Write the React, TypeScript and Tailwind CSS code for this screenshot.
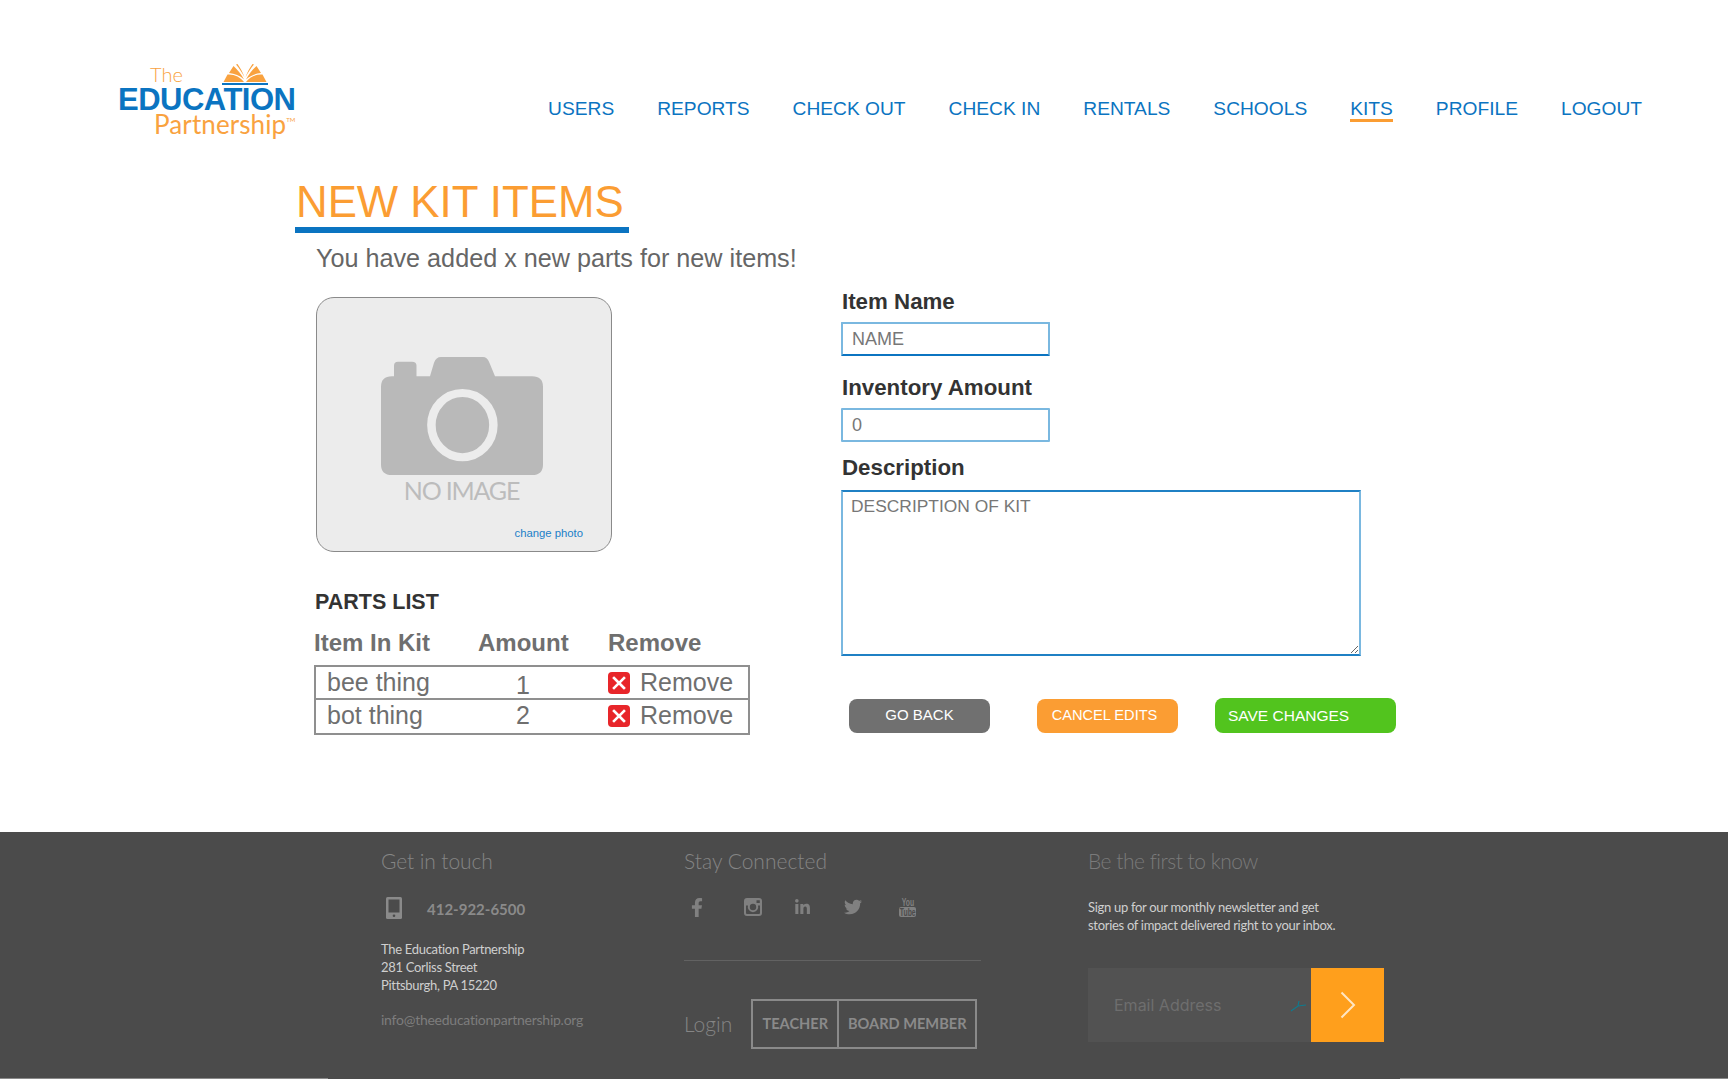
import { FaFacebookF, FaLinkedinIn, FaTwitter } from "react-icons/fa";

const navItems = ["USERS", "REPORTS", "CHECK OUT", "CHECK IN", "RENTALS", "SCHOOLS", "KITS", "PROFILE", "LOGOUT"];

const parts = [
  { name: "bee thing", amount: "1", rowClass: "pb-[4px]", textClass: "pb-[3px]", amountClass: "pt-[4px]" },
  { name: "bot thing", amount: "2", rowClass: "pb-[2px]", textClass: "pb-[2px]", amountClass: "pb-[2px]" },
];

const Logo = () => (
  <div className="flex w-[178px] flex-col font-['Lato',sans-serif]">
    <div className="flex h-[26px] items-end">
      <span className="ml-[31px] text-[20px] leading-[24px] font-light text-[#f9a23f]">The</span>
      <svg viewBox="0 0 46 21" className="mb-[1px] ml-[39px] h-[21px] w-[46px]">
        <g fill="#f9a23f">
          <path d="M1.5 18 L5.5 10.5 C12 10 18.5 13 22 18 Z" />
          <path d="M7 9 L11.5 2 C15.5 5.5 19.5 10.5 22 15.5 C18 11.5 12.5 9.5 7 9 Z" />
          <path d="M14 0.5 L15.5 0 C18.5 4 21 9 22.5 13.5 C20 8.5 17 4 14 0.5 Z" />
          <path d="M44.5 18 L40.5 10.5 C34 10 27.5 13 24 18 Z" />
          <path d="M39 9 L34.5 2 C30.5 5.5 26.5 10.5 24 15.5 C28 11.5 33.5 9.5 39 9 Z" />
          <path d="M32 0.5 L30.5 0 C27.5 4 25 9 23.5 13.5 C26 8.5 29 4 32 0.5 Z" />
        </g>
        <rect x="0" y="19" width="46" height="2" fill="#0b74c1" />
      </svg>
    </div>
    <span className="-ml-[1px] font-['Liberation_Sans',sans-serif] text-[31px] leading-[27px] font-bold tracking-[-0.5px] text-[#0b74c1]">
      EDUCATION
    </span>
    <span className="ml-[35px] flex items-start text-[26px] leading-[23px] tracking-[0.1px] whitespace-nowrap text-[#f9a23f]">
      Partnership<span className="mt-[4px] text-[6px] leading-[6px]">TM</span>
    </span>
  </div>
);

const Header = () => (
  <header className="flex h-[177px] items-start justify-between pr-[86px] pl-[119px]">
    <div className="mt-[60px]">
      <Logo />
    </div>
    <nav className="mt-[97px] flex gap-[43px] text-[19.2px] leading-[24px] text-[#0b74c1]">
      {navItems.map((item) => (
        <a key={item} className={item === "KITS" ? "h-[25px] border-b-[3px] border-[#fb9d33]" : ""}>
          {item}
        </a>
      ))}
    </nav>
  </header>
);

const Camera = () => (
  <svg viewBox="0 0 162 123" preserveAspectRatio="none" className="h-[118px] w-[162px]">
    <path
      d="M13 20 V9 Q13 5 17 5 H31 Q35.5 5 35.5 9 V20 H49 L53 6 Q55 0 60 0 H102 Q106 0 108 5 L114 20 H151 Q162 20 162 31 V112 Q162 123 151 123 H11 Q0 123 0 112 V31 Q0 20 11 20 Z"
      fill="#b9b9b9"
    />
    <ellipse cx="81.4" cy="71" rx="31" ry="33.5" fill="none" stroke="#ececec" strokeWidth="8.5" />
  </svg>
);

const PhotoBox = () => (
  <div className="flex h-[255px] w-[296px] flex-col items-center rounded-[18px] border border-[#8a8a8a] bg-[#ececec] pt-[59px]">
    <div className="mr-[5px] flex flex-col items-center">
      <Camera />
      <span className="font-['Lato',sans-serif] text-[25px] leading-[30px] tracking-[-1.2px] text-[#bcbcbc]">
        NO IMAGE
      </span>
    </div>
    <a className="mt-[21px] mr-[28px] self-end text-[11.3px] leading-[14px] text-[#1b80c8]">change photo</a>
  </div>
);

const RemoveIcon = () => (
  <svg viewBox="0 0 22 22" className="h-[22px] w-[22px] shrink-0">
    <rect width="22" height="22" rx="4" fill="#e8262a" />
    <path d="M6 6 L16 16 M16 6 L6 16" stroke="#fff" strokeWidth="2.6" strokeLinecap="square" />
  </svg>
);

const PartsList = () => (
  <div className="mt-[37px] -ml-[1px]">
    <h2 className="text-[21.5px] leading-[26px] font-bold text-[#333]">PARTS LIST</h2>
    <div className="mt-[15px] grid grid-cols-[164px_130px_1fr] -ml-[1px] text-[24px] leading-[26px] font-bold text-[#6f6f6f]">
      <span>Item In Kit</span>
      <span>Amount</span>
      <span>Remove</span>
    </div>
    <div className="mt-[9px] -ml-[1px] h-[70px] w-[436px] border-2 border-[#8f8f8f] text-[25px] leading-[28px] text-[#6f6f6f]">
      {parts.map((part, index) => (
        <div
          key={part.name}
          className={`grid h-[33px] grid-cols-[162px_130px_1fr] items-center ${part.rowClass} ${index === 0 ? "border-b-2 border-[#8f8f8f]" : ""}`}
        >
          <span className={`pl-[11px] ${part.textClass}`}>{part.name}</span>
          <span className={`pl-[38px] ${part.amountClass}`}>{part.amount}</span>
          <span className="flex items-center gap-[10px]">
            <RemoveIcon />
            <span className={part.textClass}>Remove</span>
          </span>
        </div>
      ))}
    </div>
  </div>
);

const KitForm = () => (
  <div className="flex flex-col pt-[16px] pl-[1px]">
    <label className="text-[22.3px] leading-[26px] font-bold text-[#333]">Item Name</label>
    <input
      placeholder="NAME"
      className="mt-[7px] -ml-[1px] h-[34px] w-[209px] rounded-[1px] border-2 border-[#7ab8e0] border-b-[#0b74c1] px-[9px] text-[18px] outline-none placeholder:text-[#777]"
    />
    <label className="mt-[19px] text-[22.3px] leading-[26px] font-bold text-[#333]">Inventory Amount</label>
    <input
      placeholder="0"
      className="mt-[7px] -ml-[1px] h-[34px] w-[209px] rounded-[1px] border-2 border-[#7ab8e0] px-[9px] text-[18px] outline-none placeholder:text-[#777]"
    />
    <label className="mt-[13px] text-[22.3px] leading-[26px] font-bold text-[#333]">Description</label>
    <textarea
      placeholder="DESCRIPTION OF KIT"
      className="mt-[9px] -ml-[1px] block h-[166px] w-[520px] border-2 border-[#7ab8e0] border-t-[#1f80c4] border-b-[#1f80c4] px-[8px] py-[2px] text-[17.4px] leading-[24px] outline-none placeholder:text-[#777]"
    />
    <div className="mt-[42px] ml-[7px] flex items-end text-white">
      <button className="h-[34px] w-[141px] rounded-[8px] bg-[#707070] pb-[1px] text-[15px]">GO BACK</button>
      <button className="ml-[47px] h-[34px] w-[141px] rounded-[8px] bg-[#fb9d33] pr-[6px] text-[14.6px]">CANCEL EDITS</button>
      <button className="ml-[37px] h-[35px] w-[181px] rounded-[8px] bg-[#52c41e] pl-[13px] text-left text-[15.5px]">SAVE CHANGES</button>
    </div>
  </div>
);

const InstagramIcon = () => (
  <svg viewBox="0 0 18 18" className="h-[18px] w-[18px]">
    <path
      fillRule="evenodd"
      fill="#808080"
      d="M3 0 H15 Q18 0 18 3 V15 Q18 18 15 18 H3 Q0 18 0 15 V3 Q0 0 3 0 Z M2 7.5 V15 Q2 16 3 16 H15 Q16 16 16 15 V7.5 H14 A5.2 5.2 0 1 1 4 7.5 Z M9 5.8 A3.2 3.2 0 1 0 9 12.2 A3.2 3.2 0 1 0 9 5.8 Z M12.5 2.2 V5 H15.8 V2.2 Z"
    />
  </svg>
);

const YoutubeIcon = () => (
  <div className="flex w-[17px] flex-col items-center font-['Liberation_Sans',sans-serif] text-[11px] leading-[10px] font-bold whitespace-nowrap">
    <span className="inline-block scale-x-[0.62] text-[#808080]">You</span>
    <span className="flex w-[17px] justify-center rounded-[2px] bg-[#808080] text-[#4b4b4b]">
      <span className="inline-block scale-x-[0.62]">Tube</span>
    </span>
  </div>
);

const Footer = () => (
  <footer className="flex h-[247px] flex-col bg-[#4b4b4b] font-['Lato',sans-serif]">
    <div className="flex flex-1 pt-[17px] pl-[381px]">
      <div className="w-[303px]">
        <h3 className="text-[21px] leading-[24px] font-light tracking-[-0.1px] text-[#858585]">Get in touch</h3>
        <div className="mt-[24px] ml-[5px] flex h-[22px] items-center gap-[25px]">
          <svg viewBox="0 0 16 22" className="h-[22px] w-[16px]">
            <rect width="16" height="22" rx="1.5" fill="#8a8a8a" />
            <rect x="2.5" y="2.5" width="11" height="13" fill="#4b4b4b" />
            <circle cx="8" cy="18.8" r="1.3" fill="#4b4b4b" />
          </svg>
          <span className="mt-[2px] text-[15px] font-bold text-[#8a8a8a]">412-922-6500</span>
        </div>
        <p className="mt-[21px] text-[13px] leading-[18px] tracking-[-0.3px] text-[#cfcfcf]">
          The Education Partnership
          <br />
          281 Corliss Street
          <br />
          Pittsburgh, PA 15220
        </p>
        <a className="mt-[16px] block text-[14px] leading-[20px] tracking-[-0.25px] text-[#7d7d7d]">info@theeducationpartnership.org</a>
      </div>
      <div className="w-[404px]">
        <h3 className="text-[21px] leading-[24px] font-light text-[#858585]">Stay Connected</h3>
        <div className="mt-[24px] flex h-[20px] w-[297px] items-center text-[#808080]">
          <FaFacebookF className="ml-[7px] h-[19px] w-[12px]" />
          <div className="ml-[41px]">
            <InstagramIcon />
          </div>
          <FaLinkedinIn className="ml-[32px] h-[17px] w-[17px]" />
          <FaTwitter className="ml-[33px] h-[18px] w-[18px]" />
          <div className="ml-[37px]">
            <YoutubeIcon />
          </div>
        </div>
        <div className="mt-[43px] h-[1px] w-[297px] bg-[#626262]" />
        <div className="mt-[38px] flex items-center">
          <span className="text-[21px] leading-[28px] font-light text-[#858585]">Login</span>
          <div className="ml-[19px] flex h-[50px] w-[226px] border-2 border-[#8a8a8a] text-[14.6px] font-bold text-[#8a8a8a]">
            <span className="flex w-[86px] items-center justify-center border-r-2 border-[#8a8a8a]">TEACHER</span>
            <span className="flex flex-1 items-center justify-center whitespace-nowrap">BOARD MEMBER</span>
          </div>
        </div>
      </div>
      <div className="w-[296px]">
        <h3 className="text-[21px] leading-[24px] font-light tracking-[-0.5px] text-[#7a7a7a]">Be the first to know</h3>
        <p className="mt-[25px] text-[13px] leading-[18px] tracking-[-0.3px] text-[#cfcfcf]">
          Sign up for our monthly newsletter and get
          <br />
          stories of impact delivered right to your inbox.
        </p>
        <div className="mt-[34px] flex h-[74px] w-[296px]">
          <div className="relative flex-1 bg-[#525252]">
            <input
              placeholder="Email Address"
              className="h-full w-full pl-[26px] font-['Inter',sans-serif] text-[16px] outline-none placeholder:text-[#6e6e6e]"
            />
            <svg viewBox="0 0 18 12" className="absolute top-[32px] right-[3px] h-[12px] w-[18px]">
              <path d="M1 11 L8 6 L16 5 M8 6 L9 1" fill="none" stroke="#0f7a8e" strokeWidth="1.2" />
            </svg>
          </div>
          <button className="flex w-[73px] items-center justify-center bg-[#ff9f1c]">
            <svg viewBox="0 0 16 28" className="h-[28px] w-[16px]">
              <path d="M1.5 1.5 L14 14 L1.5 26.5" fill="none" stroke="#ffe6c4" strokeWidth="2" />
            </svg>
          </button>
        </div>
      </div>
    </div>
    <div className="flex h-[1px] justify-between">
      <div className="w-[328px] bg-[#8a8a8a]" />
      <div className="w-[328px] bg-[#8a8a8a]" />
    </div>
  </footer>
);

const App = () => {
  return (
    <div className="flex h-[1079px] flex-col overflow-hidden bg-white font-['Liberation_Sans',Arial,sans-serif]">
      <Header />
      <main className="flex-1 pl-[295px]">
        <h1 className="w-[334px] border-b-[6px] border-[#0b74c1] pl-[1px] text-[43.8px] leading-[50px] whitespace-nowrap text-[#fb9d33]">
          NEW KIT ITEMS
        </h1>
        <p className="mt-[10px] ml-[21px] text-[25.2px] leading-[30px] text-[#666]">You have added x new parts for new items!</p>
        <div className="ml-[21px] flex">
          <div className="w-[525px] pt-[24px]">
            <PhotoBox />
            <PartsList />
          </div>
          <KitForm />
        </div>
      </main>
      <Footer />
    </div>
  );
};

export default App;
